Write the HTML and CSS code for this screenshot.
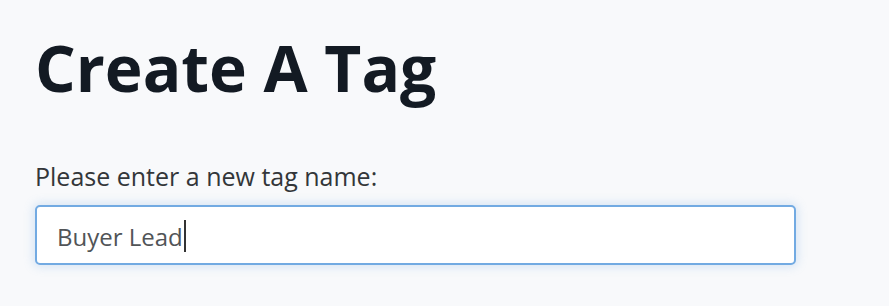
FILE: index.html
```html
<!DOCTYPE html>
<html lang="en">
<head>
<meta charset="utf-8">
<title>Create A Tag</title>
<link rel="stylesheet" href="styles.css">
</head>
<body>
<main class="page">
  <h1 class="title">Create A Tag</h1>
  <form class="tag-form">
    <label class="field-label" for="tag-name">Please enter a new tag name:</label>
    <div class="text-field" id="tag-name" role="textbox" aria-label="Tag name"><span class="value">Buyer Lead</span><span class="caret"></span></div>
  </form>
</main>
</body>
</html>
```

FILE: styles.css
```css
html, body {
  margin: 0;
  padding: 0;
  background: #f8f9fb;
}

body {
  font-family: "Open Sans", "Noto Sans", sans-serif;
  width: 889px;
  height: 306px;
  overflow: hidden;
}

.page {
  padding: 36px 0 0 35px;
}

.title {
  margin: 0;
  font-size: 64px;
  line-height: 1;
  font-weight: 700;
  color: #131a23;
  letter-spacing: 0;
}

.tag-form {
  display: flex;
  flex-direction: column;
  margin-top: 57px;
}

.field-label {
  font-size: 25px;
  line-height: 38px;
  color: #333639;
  margin-bottom: 10px;
}

.text-field {
  box-sizing: border-box;
  width: 761px;
  height: 60px;
  border: 2px solid #72aae2;
  border-radius: 5px;
  background: #ffffff;
  box-shadow: 0 0 10px 2px rgba(114, 170, 226, 0.25);
  display: flex;
  align-items: center;
  padding: 2px 0 0 20px;
  font-size: 24px;
  color: #515457;
}

.caret {
  display: inline-block;
  width: 2px;
  height: 32px;
  background: #333;
  margin-left: 1px;
}
```
